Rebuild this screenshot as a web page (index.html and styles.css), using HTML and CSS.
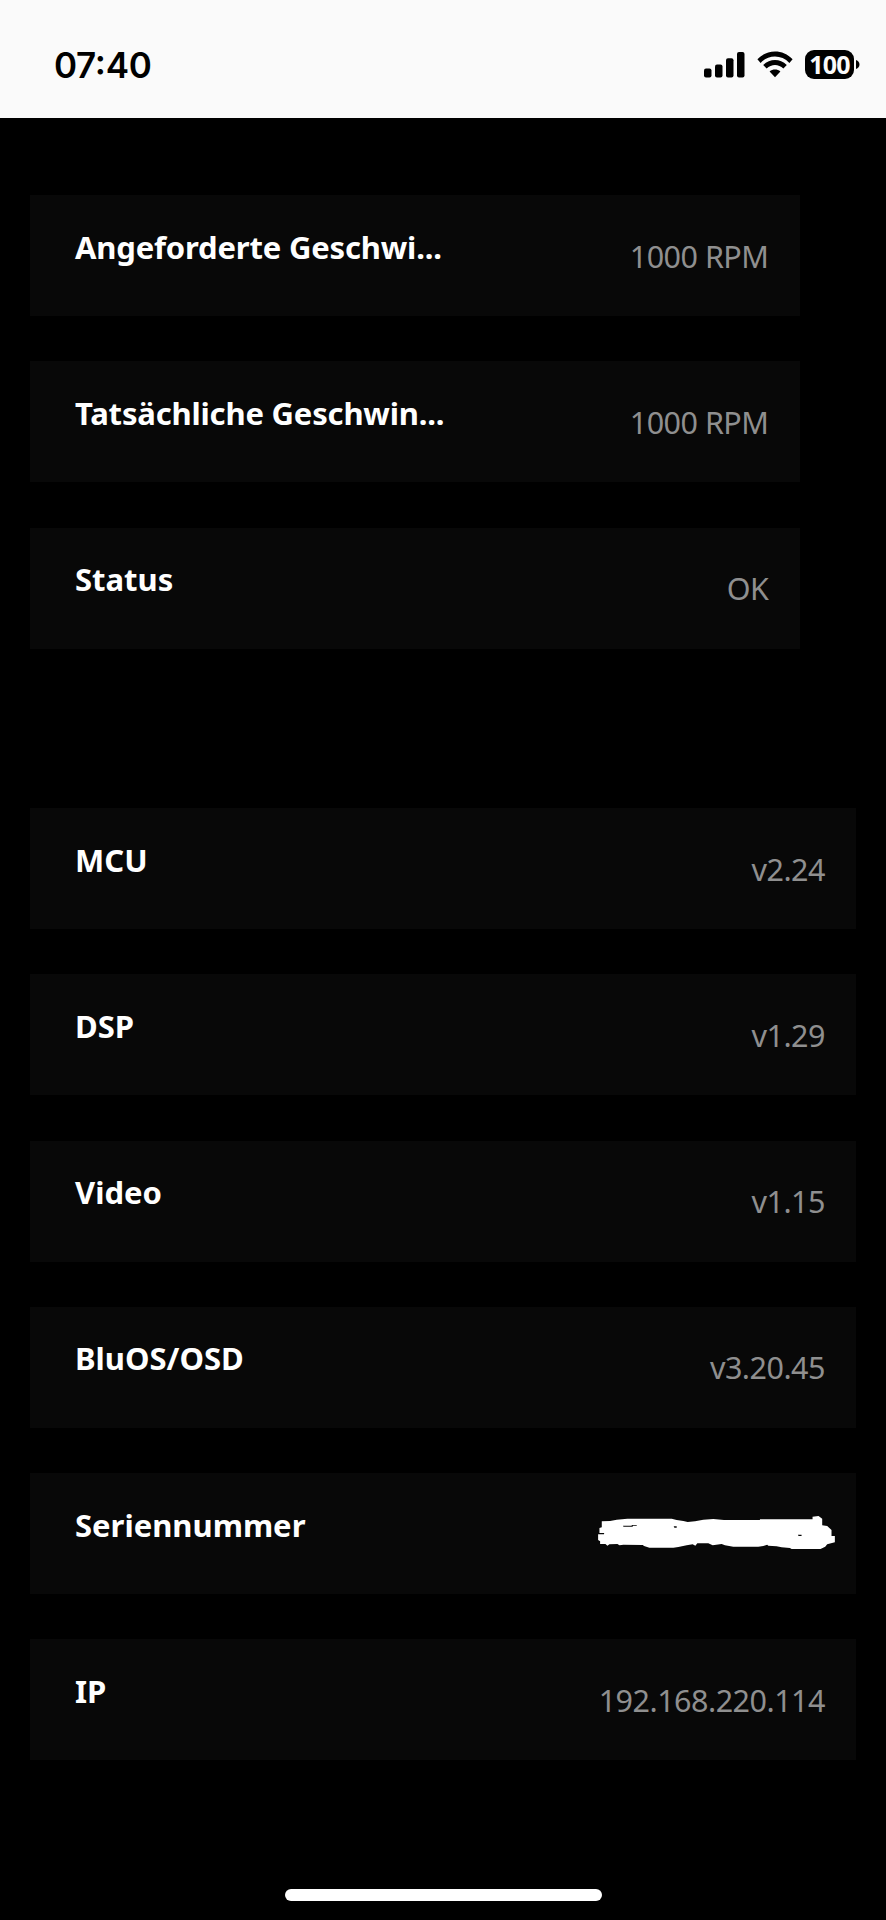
FILE: index.html
```
<!DOCTYPE html>
<html lang="de">
<head>
  <meta charset="UTF-8">
  <title>Systeminfo</title>
  <link rel="stylesheet" href="styles.css">
</head>
<body>
  <header class="statusbar">
    <span class="time">07:40</span>
    <div class="icons">
      <svg class="signal" width="41" height="26" viewBox="0 0 41 26">
        <rect x="0" y="16.5" width="7.5" height="9" rx="2"/>
        <rect x="11" y="12.5" width="7.5" height="13" rx="2"/>
        <rect x="22" y="6.2" width="7.5" height="19.3" rx="2"/>
        <rect x="33" y="0" width="7.5" height="25.5" rx="2"/>
      </svg>
      <svg class="wifi" width="36" height="27" viewBox="0 0 36 27">
        <path d="M0.4 8.3C10 -2.2 26 -2.2 35.6 8.3L32.4 11.9C24.5 3.4 11.5 3.4 3.6 11.9Z"/>
        <path d="M6.2 14C13 7.3 23 7.3 29.8 14L26.4 17.6C21.5 12.9 14.5 12.9 9.6 17.6Z"/>
        <path d="M12.6 20.5C15.8 17.9 20.2 17.9 23.4 20.5L18 26.3Z"/>
      </svg>
      <div class="battery">
        <span class="level">100</span>
        <svg width="4" height="9" viewBox="0 0 4 9"><path d="M0 0C4.6 1 4.6 8 0 9Z"/></svg>
      </div>
    </div>
  </header>

  <main>
    <section class="group fan">
      <div class="row"><span class="label long">Angeforderte Geschwi...</span><span class="value">1000 RPM</span></div>
      <div class="row"><span class="label long">Tatsächliche Geschwin...</span><span class="value">1000 RPM</span></div>
      <div class="row"><span class="label">Status</span><span class="value">OK</span></div>
    </section>

    <section class="group versions">
      <div class="row"><span class="label">MCU</span><span class="value">v2.24</span></div>
      <div class="row"><span class="label">DSP</span><span class="value">v1.29</span></div>
      <div class="row"><span class="label">Video</span><span class="value">v1.15</span></div>
      <div class="row"><span class="label">BluOS/OSD</span><span class="value">v3.20.45</span></div>
      <div class="row">
        <span class="label">Seriennummer</span>
        <svg class="scribble" width="237.3" height="33.3" viewBox="54 48 712 100">
          <path fill="#fff" d="M65 64L90 63L110 59L142 56H275L290 60L310 63L323 66L345 64L370 59L400 57L432 60H540V58H698V50L716 48L727 56V76L742 78L755 90V108H765V127L742 133L736 140L722 147H635L630 144L605 142L590 139L565 137L562 134L550 138L535 140H460L435 136L425 132L398 136L385 130L352 130L346 137L338 133L320 136L295 141L280 143H208L192 138L188 135L130 134L118 136L112 132L88 133L82 137L76 132H60V124L54 120V103H72V99H58V84L65 82Z"/>
          <path fill="#080808" d="M129 77H155V75H170V77H158V80H130ZM281 79H290V83H283ZM654 104H665V108H656Z"/>
        </svg>
      </div>
      <div class="row"><span class="label">IP</span><span class="value">192.168.220.114</span></div>
    </section>
  </main>

  <div class="home-indicator"></div>
</body>
</html>
```

FILE: styles.css
```
* {
  box-sizing: border-box;
}
body {
  margin: 0;
  height: 1920px;
  display: flex;
  flex-direction: column;
  background-color: #000;
  color: white;
  font-family: "Noto Sans", sans-serif;
  overflow: hidden;
}
.statusbar {
  display: flex;
  justify-content: space-between;
  align-items: flex-start;
  height: 118px;
  padding: 50px 26px 0 54px;
  background-color: #fafafa;
  color: #000;
}
.time {
  font-family: Inter, sans-serif;
  font-size: 35px;
  font-weight: 600;
  line-height: 30px;
  letter-spacing: -0.3px;
  font-feature-settings: "calt" 1;
}
.icons {
  display: flex;
  align-items: flex-start;
}
.signal {
  margin-top: 2px;
  margin-right: 12px;
}
.wifi {
  margin-top: 1px;
  margin-right: 12px;
}
.battery {
  display: flex;
  align-items: center;
  gap: 2px;
}
.level {
  width: 49px;
  height: 29px;
  border-radius: 9px;
  background-color: #000;
  color: #fafafa;
  font-size: 25px;
  font-weight: 700;
  line-height: 29px;
  letter-spacing: -0.8px;
  text-align: center;
}
main {
  flex: 1;
  padding: 77px 30px 0;
}
.group {
  display: flex;
  flex-direction: column;
  gap: 45.25px;
}
.fan {
  width: 769.5px;
}
.versions {
  margin-top: 159.5px;
  width: 826px;
}
.row {
  display: flex;
  justify-content: space-between;
  align-items: flex-start;
  height: 121px;
  padding: 30.5px 31px 0 45px;
  background-color: #080808;
  font-size: 31px;
  line-height: 42px;
}
.label {
  font-weight: 700;
}
.long {
  letter-spacing: -0.18px;
}
.value {
  margin-top: 9px;
  color: #8f8f8f;
  font-size: 30.5px;
  letter-spacing: -0.5px;
}
.scribble {
  margin-top: 12.5px;
  margin-right: -10.3px;
}
.home-indicator {
  width: 317px;
  height: 12px;
  margin: 0 auto 19px;
  border-radius: 6px;
  background-color: #fff;
}
```
